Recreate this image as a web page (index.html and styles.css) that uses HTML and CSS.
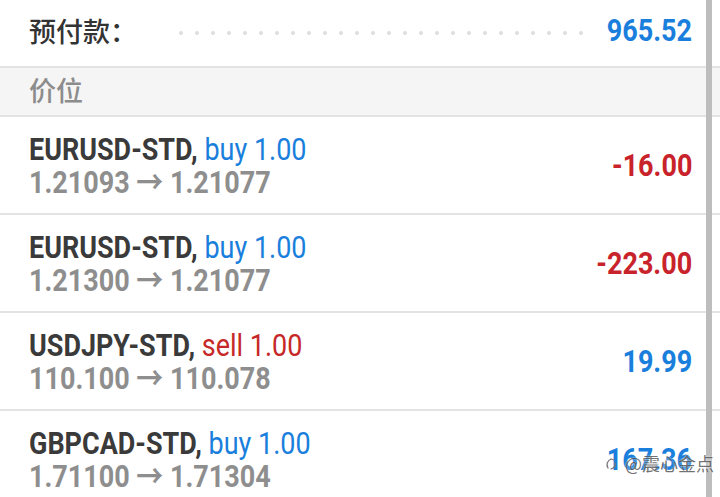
FILE: index.html
```html
<!DOCTYPE html>
<html lang="zh">
<head>
<meta charset="utf-8">
<link rel="stylesheet" href="styles.css">
</head>
<body>
<div class="screen">
  <div class="list">
    <div class="summary">
      <span class="label">预付款：</span>
      <span class="dots"></span>
      <span class="amount">965.52</span>
    </div>
    <div class="section">价位</div>
    <div class="trade">
      <div class="info">
        <div class="title">EURUSD-STD, <span class="buy">buy 1.00</span></div>
        <div class="prices">1.21093 → 1.21077</div>
      </div>
      <div class="profit loss">-16.00</div>
    </div>
    <div class="trade">
      <div class="info">
        <div class="title">EURUSD-STD, <span class="buy">buy 1.00</span></div>
        <div class="prices">1.21300 → 1.21077</div>
      </div>
      <div class="profit loss">-223.00</div>
    </div>
    <div class="trade">
      <div class="info">
        <div class="title">USDJPY-STD, <span class="sell">sell 1.00</span></div>
        <div class="prices">110.100 → 110.078</div>
      </div>
      <div class="profit gain">19.99</div>
    </div>
    <div class="trade">
      <div class="info">
        <div class="title">GBPCAD-STD, <span class="buy">buy 1.00</span></div>
        <div class="prices">1.71100 → 1.71304</div>
      </div>
      <div class="profit gain">167.36</div>
    </div>
  </div>
  <div class="scrollbar"></div>
  <div class="watermark">
    <svg width="18" height="18" viewBox="0 0 18 18"><path d="M4 14c-2-3-1-7 3-9M7 5l3 1M11 9c1 3-1 5-4 6" fill="none" stroke="#777" stroke-width="1.3" stroke-linecap="round"/></svg>
    <span>@震心金点</span>
  </div>
</div>
</body>
</html>
```
FILE: styles.css
```css
* { box-sizing: border-box; }
html, body { margin: 0; padding: 0; background: #fff; }
body { font-family: Roboto, "Noto Sans CJK SC", sans-serif; }
.screen { position: relative; width: 720px; height: 497px; overflow: hidden; }
.list { width: 720px; }
.scrollbar { position: absolute; top: 0; bottom: 0; left: 706px; width: 6px; background: #bdbdbd; }
.summary { height: 68px; display: flex; align-items: center; padding: 0 28px 6px 29px; border-bottom: 2px solid #e3e3e3; }
.label { font-size: 27px; font-weight: 500; color: #333; font-family: "Noto Sans CJK SC", sans-serif; }
.dots { flex: 1; height: 4px; margin: 6px 4px 0 36px; background-image: radial-gradient(circle, #e0e0e0 1.8px, transparent 2.2px); background-size: 16px 4px; background-repeat: repeat-x; }
.amount { font-size: 31px; font-weight: 700; color: #1a7fdc; transform: scaleX(0.87); transform-origin: right center; }
.section { height: 49px; background: #f5f5f5; border-bottom: 2px solid #e3e3e3; padding: 0 29px; font-size: 27px; font-weight: 500; color: #8c8c8c; font-family: "Noto Sans CJK SC", sans-serif; line-height: 44px; }
.trade { height: 98px; display: flex; align-items: center; justify-content: space-between; padding: 0 28px 0 29px; border-bottom: 2px solid #e3e3e3; }
.info { display: flex; flex-direction: column; padding-top: 2px; transform: scaleX(0.87); transform-origin: left center; }
.title { font-size: 31px; font-weight: 700; color: #3a3a3a; line-height: 32px; white-space: nowrap; }
.title span { font-weight: 400; }
.buy { color: #1a7fdc; }
.sell { color: #c62828; }
.prices { font-size: 31px; font-weight: 700; color: #8e8e8e; line-height: 33px; white-space: nowrap; }
.profit { font-size: 31px; font-weight: 700; transform: scaleX(0.87); transform-origin: right center; }
.loss { color: #c8232b; }
.gain { color: #1a7fdc; }
.watermark { position: absolute; left: 604px; top: 450px; display: flex; align-items: center; gap: 3px; color: rgba(50,50,50,0.7); font-size: 18px; font-family: "Noto Sans CJK SC", sans-serif; text-shadow: 0 0 2px #fff; }
```
